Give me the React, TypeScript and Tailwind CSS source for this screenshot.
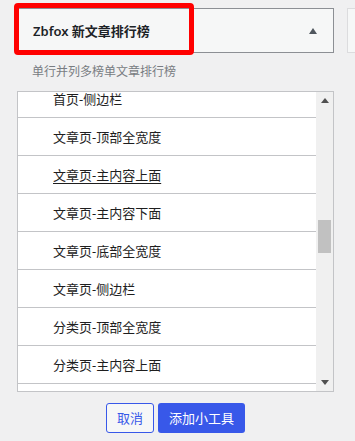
import React from "react";

const rows = [
  "首页-侧边栏",
  "文章页-顶部全宽度",
  "文章页-主内容上面",
  "文章页-主内容下面",
  "文章页-底部全宽度",
  "文章页-侧边栏",
  "分类页-顶部全宽度",
  "分类页-主内容上面",
  "分类页-主内容下面",
];

export default function App() {
  return (
    <div
      className="w-[355px] h-[441px] overflow-hidden bg-[#f0f0f1] flex gap-[13px]"
      style={{ fontFamily: '"Noto Sans", "Noto Sans CJK SC", sans-serif' }}
    >
      <div className="ml-[17px] w-[317px] shrink-0 flex flex-col">
        {/* header */}
        <div className="relative mt-[8px] h-[45px] border border-[#8c8f94] bg-[#f6f7f7] flex items-center justify-between pl-[15px] pr-[16px]">
          <span className="text-[13px] font-semibold text-[#1d2327] leading-[18px]">
            Zbfox 新文章排行榜
          </span>
          <svg width="8" height="6" viewBox="0 0 8 6">
            <path d="M4 0 L8 6 L0 6 Z" fill="#50575e" />
          </svg>
          <div className="absolute left-[-4px] top-[-6px] w-[180px] h-[52px] border-[5px] border-[#ff0000] rounded-[4px]" />
        </div>

        {/* description */}
        <div className="mt-[10px] pl-[15px] text-[12px] leading-[18px] text-[#787c82]">
          单行并列多榜单文章排行榜
        </div>

        {/* list */}
        <div className="mt-[10px] h-[301px] border border-[#c3c4c7] bg-white flex">
          <div className="flex-1 overflow-hidden">
            <div className="-mt-[12px] flex flex-col">
              {rows.map((r, i) => (
                <div
                  key={r}
                  className="h-[38px] shrink-0 border-b border-[#c3c4c7] flex items-center pl-[35px]"
                >
                  <span
                    className={
                      "text-[13px] leading-[18px] text-[#1e1e1e]" +
                      (i === 2 ? " underline underline-offset-[3px]" : "")
                    }
                  >
                    {r}
                  </span>
                </div>
              ))}
            </div>
          </div>
          <div className="w-[17px] shrink-0 bg-[#f0f0f0] flex flex-col">
            <div className="h-[17px] flex items-center justify-center">
              <svg width="8" height="5" viewBox="0 0 8 5">
                <path d="M4 0 L8 5 L0 5 Z" fill="#505050" />
              </svg>
            </div>
            <div className="flex-1 flex justify-center">
              <div className="mt-[111px] w-[13px] h-[33px] bg-[#c1c1c1]" />
            </div>
            <div className="h-[17px] flex items-center justify-center">
              <svg width="8" height="5" viewBox="0 0 8 5">
                <path d="M0 0 L8 0 L4 5 Z" fill="#505050" />
              </svg>
            </div>
          </div>
        </div>

        {/* buttons */}
        <div className="mt-[11px] flex justify-center gap-[4px]">
          <button className="h-[30px] w-[48px] rounded-[3px] border border-[#3858e9] bg-[#f6f7f7] text-[13px] text-[#3858e9] leading-[18px]">
            取消
          </button>
          <button className="h-[30px] w-[87px] rounded-[3px] bg-[#3858e9] text-[13px] text-white leading-[18px]">
            添加小工具
          </button>
        </div>
      </div>

      {/* right neighbouring panel */}
      <div className="mt-[8px] h-[45px] w-[20px] shrink-0 border border-[#dcdcde] bg-[#f6f7f7]" />
    </div>
  );
}
